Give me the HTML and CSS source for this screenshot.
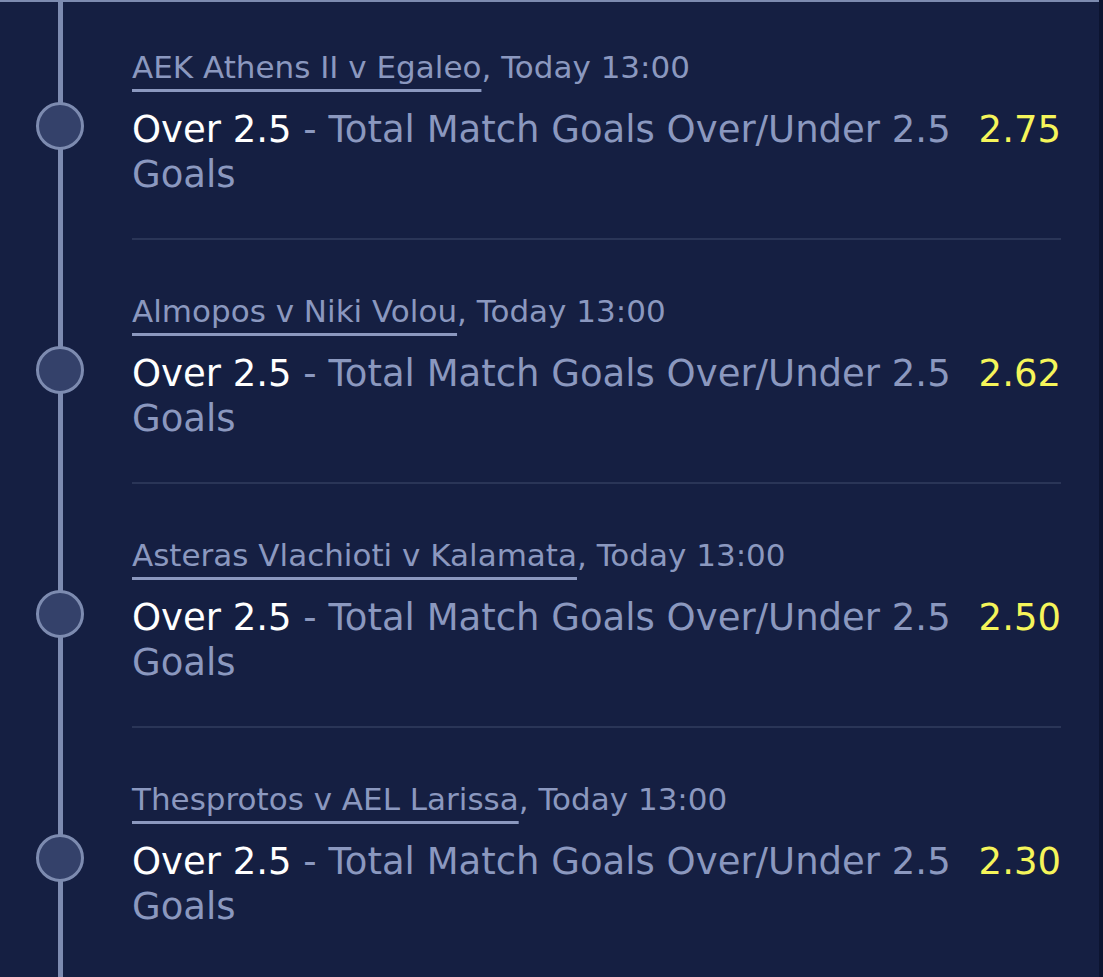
FILE: index.html
```html
<!DOCTYPE html>
<html lang="en">
<head>
  <meta charset="UTF-8">
  <meta name="viewport" content="width=device-width, initial-scale=1.0">
  <title>Bet Slip</title>
  <link rel="stylesheet" href="styles.css">
</head>
<body>
  <div class="slip">
    <div class="bet">
      <div class="bet-rail"><span class="bet-dot"></span></div>
      <div class="bet-body">
        <div class="bet-event"><a class="event-link">AEK Athens II v Egaleo</a>, Today 13:00</div>
        <div class="bet-selection">
          <p class="selection-text"><span class="selection-name">Over 2.5</span> - Total Match Goals Over/Under 2.5 Goals</p>
          <span class="odds">2.75</span>
        </div>
      </div>
    </div>

    <div class="bet">
      <div class="bet-rail"><span class="bet-dot"></span></div>
      <div class="bet-body">
        <div class="bet-event"><a class="event-link">Almopos v Niki Volou</a>, Today 13:00</div>
        <div class="bet-selection">
          <p class="selection-text"><span class="selection-name">Over 2.5</span> - Total Match Goals Over/Under 2.5 Goals</p>
          <span class="odds">2.62</span>
        </div>
      </div>
    </div>

    <div class="bet">
      <div class="bet-rail"><span class="bet-dot"></span></div>
      <div class="bet-body">
        <div class="bet-event"><a class="event-link">Asteras Vlachioti v Kalamata</a>, Today 13:00</div>
        <div class="bet-selection">
          <p class="selection-text"><span class="selection-name">Over 2.5</span> - Total Match Goals Over/Under 2.5 Goals</p>
          <span class="odds">2.50</span>
        </div>
      </div>
    </div>

    <div class="bet">
      <div class="bet-rail"><span class="bet-dot"></span></div>
      <div class="bet-body">
        <div class="bet-event"><a class="event-link">Thesprotos v AEL Larissa</a>, Today 13:00</div>
        <div class="bet-selection">
          <p class="selection-text"><span class="selection-name">Over 2.5</span> - Total Match Goals Over/Under 2.5 Goals</p>
          <span class="odds">2.30</span>
        </div>
      </div>
    </div>
  </div>
</body>
</html>
```

FILE: styles.css
```css
:root {
  --bg-color: #151f42;
  --edge-color: #0c1430;
  --rail-color: #7d8bb0;
  --dot-fill: #34416a;
  --muted-text: #8b98bf;
  --divider: #2a3557;
  --odds-color: #f5f55a;
}

* {
  box-sizing: border-box;
  margin: 0;
  padding: 0;
}

body {
  font-family: 'DejaVu Sans', Verdana, sans-serif;
  background-color: var(--edge-color);
  color: var(--muted-text);
  min-height: 100vh;
}

.slip {
  position: relative;
  width: 1099px;
  min-height: 977px;
  background-color: var(--bg-color);
  border-top: 2px solid var(--rail-color);
  padding-right: 38px;
}

/* timeline rail behind the dots */
.slip::before {
  content: '';
  position: absolute;
  top: 0;
  bottom: 0;
  left: 58px;
  width: 5px;
  background-color: var(--rail-color);
}

.bet {
  display: flex;
}

.bet-rail {
  width: 132px;
  flex-shrink: 0;
  padding-top: 106px;
}

.bet:first-child .bet-rail {
  padding-top: 100px;
}

.bet-dot {
  position: relative;
  display: block;
  width: 48px;
  height: 48px;
  margin-left: 36px;
  border-radius: 50%;
  background-color: var(--dot-fill);
  border: 3px solid var(--rail-color);
}

.bet-body {
  flex: 1;
  padding: 53px 0 41px;
  border-bottom: 2px solid var(--divider);
}

.bet:first-child .bet-body {
  padding-top: 47px;
}

.bet:last-child .bet-body {
  border-bottom: none;
}

.bet-event {
  font-size: 31px;
  line-height: 36px;
  margin-bottom: 22px;
}

.event-link {
  color: inherit;
  text-decoration: underline;
  text-decoration-thickness: 3px;
  text-underline-offset: 11px;
}

.bet-selection {
  display: flex;
  align-items: flex-start;
  justify-content: space-between;
  font-size: 37px;
  line-height: 45px;
}

.selection-text {
  max-width: 830px;
}

.selection-name {
  color: #ffffff;
}

.odds {
  color: var(--odds-color);
}
```
